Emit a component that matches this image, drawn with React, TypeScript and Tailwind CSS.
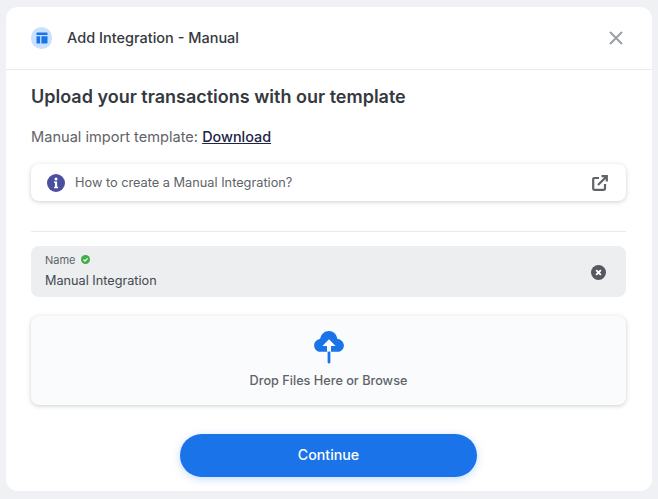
const font = { fontFamily: "Inter, sans-serif" };

function LayoutIcon() {
  return (
    <svg viewBox="0 0 12 12" className="h-[12px] w-[12px] fill-[#1a73e8]">
      <path d="M1.2 0.5h9.600a.7.7 0 0 1 .7.7v1.800H.5V1.200a.7.7 0 0 1 .7-.7z" />
      <path d="M.5 4.300h3.600v7.200H1.200a.7.7 0 0 1-.7-.7z" />
      <path d="M5.400 4.300h6.100v6.500a.7.7 0 0 1-.7.7H5.400z" />
    </svg>
  );
}

function InfoIcon() {
  return (
    <svg viewBox="0 0 18 18" className="h-[18px] w-[18px]">
      <circle cx="9" cy="9" r="9" fill="#4a4f9f" />
      <circle cx="9" cy="5" r="1.500" fill="#fff" />
      <path d="M7 7.600h3.100v5.200h1v1.400H7v-1.400h1v-3.800H7z" fill="#fff" />
    </svg>
  );
}

function ExternalIcon() {
  return (
    <svg viewBox="0 0 16 16" className="h-[16px] w-[16px] fill-none stroke-[#5f6368]" strokeWidth="2.200">
      <path d="M7 3H2.200a1 1 0 0 0-1 1v9.800a1 1 0 0 0 1 1H12a1 1 0 0 0 1-1V9" />
      <path d="M6 10 14.500 1.500M9.500 1.200h5.300v5.300" />
    </svg>
  );
}

function CloudIcon() {
  return (
    <svg viewBox="0 0 28 32" className="h-[34px] w-[30px]">
      <path
        d="M14 1c3.800 0 7 2.800 7.600 6.500 .1.600.3.800.8.900C25.600 9 28 11.500 28 14.500 28 18 25.300 20.500 22 20.500H6c-3.300 0-6-2.600-6-6 0-2.900 2-5.300 4.800-5.900.6-.1.900-.4 1.100-1C6.900 3.600 10.100 1 14 1z"
        fill="#1a73e8"
      />
      <path d="M14 8.800 20.200 15h-4.300v1H12.100v-1H7.800z" fill="#fff" />
      <path d="M12.100 14h3.800v6.500h-3.800z" fill="#fff" />
      <path d="M12.700 20.500h2.600v9.800a1.300 1.300 0 0 1-2.600 0z" fill="#1a73e8" />
    </svg>
  );
}

export default function App() {
  return (
    <div className="h-[499px] w-[658px] bg-[#eff1f5] px-[6px] pt-[7px]" style={font}>
      <div className="flex h-[484px] w-[646px] flex-col rounded-[12px] bg-white">
        <div className="flex h-[63px] flex-none items-center justify-between border-b border-[#e8eaed] pl-[25px] pr-[29px]">
          <div className="flex items-center gap-[15px]">
            <div className="flex h-[22px] w-[21px] items-center justify-center rounded-full bg-[#c9e0ff]">
              <LayoutIcon />
            </div>
            <span className="text-[14.5px] font-medium text-[#35393f]">Add Integration - Manual</span>
          </div>
          <svg viewBox="0 0 14 14" className="h-[14px] w-[14px] fill-none stroke-[#9aa0a6]" strokeWidth="2">
            <path d="M1 1 13 13M13 1 1 13" />
          </svg>
        </div>

        <div className="flex flex-1 flex-col pl-[25px] pr-[26px]">
          <h1 className="mt-[14px] text-[18px] font-semibold leading-[26px] text-[#35393f]">
            Upload your transactions with our template
          </h1>
          <p className="mt-[17px] text-[14.6px] leading-[20px] text-[#5f6368]">
            Manual import template:{" "}
            <span className="text-[14.4px] font-medium text-[#202445] underline">Download</span>
          </p>

          <div className="mt-[17px] flex h-[37px] items-center justify-between rounded-[8px] bg-white pl-[16px] pr-[18px] shadow-[0_1px_4px_rgba(60,64,67,0.25)]">
            <div className="flex items-center gap-[10px]">
              <InfoIcon />
              <span className="text-[12.75px] text-[#5f6368]">How to create a Manual Integration?</span>
            </div>
            <ExternalIcon />
          </div>

          <div className="mt-[30px] border-t border-[#e8eaed]" />

          <div className="mt-[14px] flex h-[51px] items-center justify-between rounded-[8px] bg-[#eceef0] pl-[14px] pr-[20px]">
            <div className="-mt-[2px] flex flex-col">
              <div className="flex items-center gap-[5px]">
                <span className="text-[11px] leading-[16px] text-[#5f6368]">Name</span>
                <svg viewBox="0 0 10 10" className="h-[9px] w-[9px]">
                  <circle cx="5" cy="5" r="5" fill="#3fae49" />
                  <path d="M2.800 5.100 4.400 6.700 7.300 3.700" fill="none" stroke="#fff" strokeWidth="1.400" />
                </svg>
              </div>
              <span className="mt-[4px] text-[12.7px] leading-[18px] text-[#45494f]">Manual Integration</span>
            </div>
            <svg viewBox="0 0 14 14" className="mt-[1px] h-[15px] w-[15px]">
              <circle cx="7" cy="7" r="7" fill="#55595f" />
              <path d="M4.800 4.800 9.200 9.200M9.200 4.800 4.800 9.200" stroke="#fff" strokeWidth="1.800" />
            </svg>
          </div>

          <div className="mt-[19px] flex h-[89px] flex-col items-center rounded-[8px] bg-[#fafbfd] pt-[14px] shadow-[0_1px_4px_rgba(60,64,67,0.25)]">
            <CloudIcon />
            <span className="mt-[8px] text-[12.7px] font-medium leading-[18px] text-[#5f6368]">
              Drop Files Here or Browse
            </span>
          </div>

          <div className="mt-[29px] flex justify-center">
            <button className="h-[43px] w-[297px] rounded-full bg-[#1a73e8] pb-[1px] text-[14.2px] font-medium text-white shadow-[0_2px_8px_rgba(26,115,232,0.25)]">
              Continue
            </button>
          </div>
        </div>
      </div>
    </div>
  );
}
